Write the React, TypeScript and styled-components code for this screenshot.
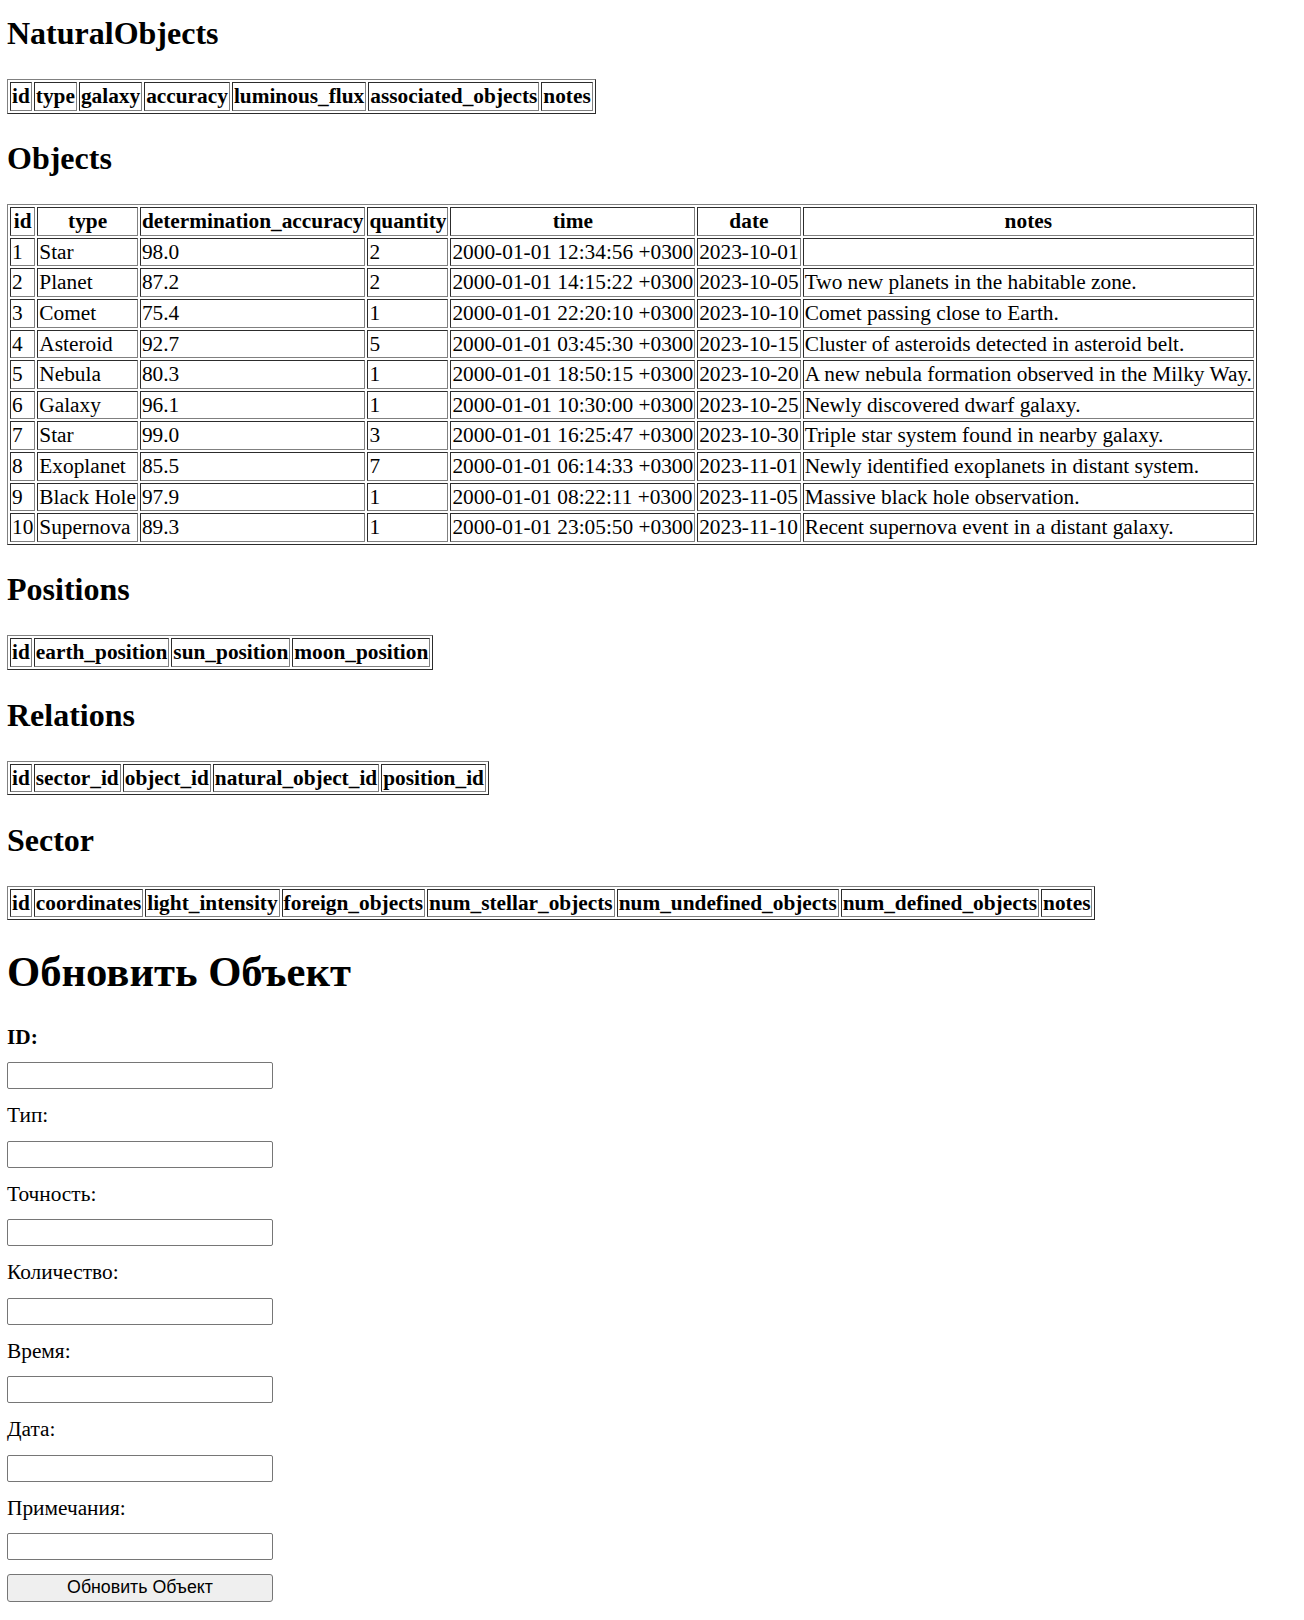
import React from "react";
import styled, { createGlobalStyle } from "styled-components";

const GlobalStyle = createGlobalStyle`
  html, body {
    margin: 0;
    padding: 0;
    background: #ffffff;
  }
  body {
    font-family: "Liberation Serif", "Times New Roman", Times, serif;
    font-size: 21.333px;
    color: #000000;
  }
`;

const Page = styled.main`
  padding: 15px 7px 0;
`;

const SectionTitle = styled.h2`
  font-size: 32px;
  line-height: 37.5px;
  font-weight: bold;
  margin: 26.56px 0;
  &:first-child {
    margin-top: 0;
  }
`;

const PageTitle = styled.h1`
  font-size: 42.667px;
  line-height: 47px;
  font-weight: bold;
  margin: 27.5px 0 29.7px;
`;

const DataTable = styled.table`
  border-collapse: separate;
  border-spacing: 2px;
  border: 1px outset grey;
  font-size: inherit;
`;

const HeadCell = styled.th`
  border: 1px inset grey;
  padding: 1px;
  line-height: 24.6px;
  font-weight: bold;
  text-align: center;
  white-space: nowrap;
`;

const Cell = styled.td`
  border: 1px inset grey;
  padding: 1px;
  line-height: 24.6px;
  text-align: left;
  white-space: nowrap;
`;

const Form = styled.form`
  display: flex;
  flex-direction: column;
  align-items: flex-start;
  gap: 13.75px;
`;

const FieldLabel = styled.label<{ $bold?: boolean }>`
  line-height: 24px;
  font-weight: ${(p) => (p.$bold ? "bold" : "normal")};
`;

const TextInput = styled.input`
  box-sizing: border-box;
  width: 266px;
  height: 27px;
  margin: 0;
  padding: 1px 3px;
  border: 1px solid #767676;
  border-radius: 2px;
  background: #ffffff;
  font-family: "Liberation Sans", Arial, sans-serif;
  font-size: 17.78px;
`;

const SubmitButton = styled.button`
  box-sizing: border-box;
  width: 266px;
  height: 27.5px;
  margin: 0;
  padding: 0 8px;
  border: 1px solid #767676;
  border-radius: 3px;
  background: #efefef;
  color: #000000;
  font-family: "Liberation Sans", Arial, Helvetica, sans-serif;
  font-size: 17.78px;
  line-height: 1;
`;

type EmptyTableProps = { columns: string[] };

const EmptyTable = ({ columns }: EmptyTableProps) => (
  <DataTable>
    <thead>
      <tr>
        {columns.map((c) => (
          <HeadCell key={c}>{c}</HeadCell>
        ))}
      </tr>
    </thead>
    <tbody></tbody>
  </DataTable>
);

const objectColumns = [
  "id",
  "type",
  "determination_accuracy",
  "quantity",
  "time",
  "date",
  "notes",
];

const objects: string[][] = [
  ["1", "Star", "98.0", "2", "2000-01-01 12:34:56 +0300", "2023-10-01", ""],
  ["2", "Planet", "87.2", "2", "2000-01-01 14:15:22 +0300", "2023-10-05", "Two new planets in the habitable zone."],
  ["3", "Comet", "75.4", "1", "2000-01-01 22:20:10 +0300", "2023-10-10", "Comet passing close to Earth."],
  ["4", "Asteroid", "92.7", "5", "2000-01-01 03:45:30 +0300", "2023-10-15", "Cluster of asteroids detected in asteroid belt."],
  ["5", "Nebula", "80.3", "1", "2000-01-01 18:50:15 +0300", "2023-10-20", "A new nebula formation observed in the Milky Way."],
  ["6", "Galaxy", "96.1", "1", "2000-01-01 10:30:00 +0300", "2023-10-25", "Newly discovered dwarf galaxy."],
  ["7", "Star", "99.0", "3", "2000-01-01 16:25:47 +0300", "2023-10-30", "Triple star system found in nearby galaxy."],
  ["8", "Exoplanet", "85.5", "7", "2000-01-01 06:14:33 +0300", "2023-11-01", "Newly identified exoplanets in distant system."],
  ["9", "Black Hole", "97.9", "1", "2000-01-01 08:22:11 +0300", "2023-11-05", "Massive black hole observation."],
  ["10", "Supernova", "89.3", "1", "2000-01-01 23:05:50 +0300", "2023-11-10", "Recent supernova event in a distant galaxy."],
];

const fields: { label: string; bold?: boolean }[] = [
  { label: "ID:", bold: true },
  { label: "Тип:" },
  { label: "Точность:" },
  { label: "Количество:" },
  { label: "Время:" },
  { label: "Дата:" },
  { label: "Примечания:" },
];

export default function App() {
  return (
    <>
      <GlobalStyle />
      <Page>
        <SectionTitle>NaturalObjects</SectionTitle>
        <EmptyTable
          columns={[
            "id",
            "type",
            "galaxy",
            "accuracy",
            "luminous_flux",
            "associated_objects",
            "notes",
          ]}
        />

        <SectionTitle>Objects</SectionTitle>
        <DataTable>
          <thead>
            <tr>
              {objectColumns.map((c) => (
                <HeadCell key={c}>{c}</HeadCell>
              ))}
            </tr>
          </thead>
          <tbody>
            {objects.map((row) => (
              <tr key={row[0]}>
                {row.map((v, i) => (
                  <Cell key={i}>{v}</Cell>
                ))}
              </tr>
            ))}
          </tbody>
        </DataTable>

        <SectionTitle>Positions</SectionTitle>
        <EmptyTable columns={["id", "earth_position", "sun_position", "moon_position"]} />

        <SectionTitle>Relations</SectionTitle>
        <EmptyTable
          columns={["id", "sector_id", "object_id", "natural_object_id", "position_id"]}
        />

        <SectionTitle>Sector</SectionTitle>
        <EmptyTable
          columns={[
            "id",
            "coordinates",
            "light_intensity",
            "foreign_objects",
            "num_stellar_objects",
            "num_undefined_objects",
            "num_defined_objects",
            "notes",
          ]}
        />

        <PageTitle>Обновить Объект</PageTitle>
        <Form onSubmit={(e) => e.preventDefault()}>
          {fields.map((f) => (
            <React.Fragment key={f.label}>
              <FieldLabel $bold={f.bold}>{f.label}</FieldLabel>
              <TextInput type="text" />
            </React.Fragment>
          ))}
          <SubmitButton type="submit">Обновить Объект</SubmitButton>
        </Form>
      </Page>
    </>
  );
}
